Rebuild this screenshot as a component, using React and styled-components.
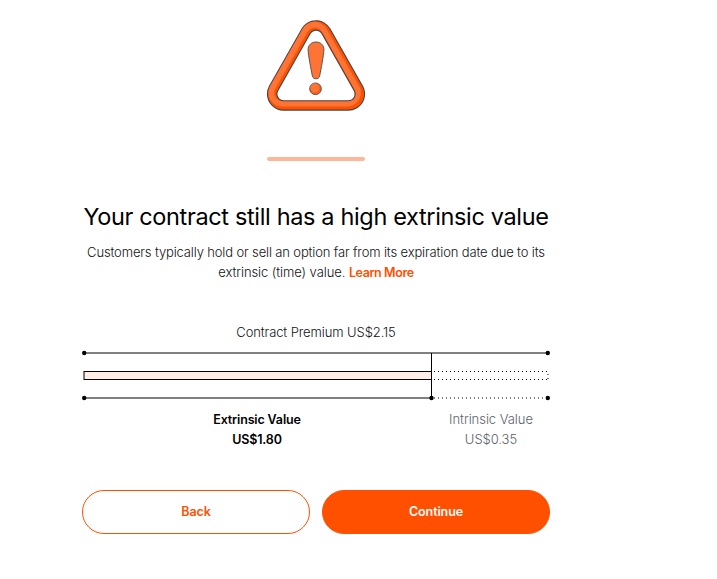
import React from 'react'
import styled, { createGlobalStyle, css } from 'styled-components'

const GlobalStyle = createGlobalStyle`
  * {
    box-sizing: border-box;
  }
  body {
    margin: 0;
    background: #fff;
    color: #000;
    font-family: Inter, 'Liberation Sans', sans-serif;
  }
`

// the three corner centres of the rounded sign
const TRIANGLE = 'M52 20.9 L84.4 78 H19.6 Z'
const MARK =
  'M52 26 C56.6 26 60.2 29.4 59.9 34 C59.6 40 57 53 55.6 60.2 C55 63.6 49 63.6 48.4 60.2 C47 53 44.4 40 44.1 34 C43.8 29.4 47.4 26 52 26 Z'

const WarningIcon = () => (
  <Sign viewBox="0 0 104 100" role="img" aria-label="Warning">
    <g strokeLinejoin="round">
      <path d={TRIANGLE} fill="#444" stroke="#444" strokeWidth="33.4" />
      <path d={TRIANGLE} fill="#ff5000" stroke="#ff5000" strokeWidth="31.2" />
      <path d={TRIANGLE} transform="translate(-1.4 -1.2)" fill="none" stroke="#ff7434" strokeWidth="27.6" />
      <path d={TRIANGLE} transform="translate(-1.2 -1)" fill="#ff5000" stroke="#ff5000" strokeWidth="16.6" />
      <path d={TRIANGLE} fill="#444" stroke="#444" strokeWidth="14.6" />
      <path d={TRIANGLE} fill="#fff" stroke="#fff" strokeWidth="12.4" />
    </g>
    <path d={MARK} fill="#ff7434" stroke="#555" strokeWidth="1" />
    <circle cx="51.5" cy="72.8" r="5.8" fill="#ff5c14" stroke="#555" strokeWidth="1" />
    <circle cx="50.8" cy="71.9" r="4.3" fill="#ff7434" />
  </Sign>
)

const ValueChart = () => (
  <Chart viewBox="0 0 468 52">
    <g stroke="#000" strokeWidth="1" fill="none">
      <path d="M2 4H466M2 49H349.5" />
      <rect x="2" y="22.5" width="347.5" height="8" fill="#ffede6" />
      <path d="M349.5 4V49" />
      <path d="M352 22.5H467M352 30.5H467M352 49H467" strokeDasharray="1 3" />
      <path d="M466 25V30" strokeDasharray="1 3" />
    </g>
    <circle cx="2.2" cy="4" r="2.2" />
    <circle cx="465.8" cy="4" r="2.2" />
    <circle cx="2.2" cy="49" r="2.2" />
    <circle cx="349.5" cy="49" r="2.2" />
    <circle cx="465.8" cy="49" r="2.2" />
  </Chart>
)

const App = () => {
  return (
    <Wrapper>
      <GlobalStyle />
      <WarningIcon />
      <Shadow />
      <Title>Your contract still has a high extrinsic value</Title>
      <Info>
        <Line $spacing="-0.14px">Customers typically hold or sell an option far from its expiration date due to its</Line>
        <Line $spacing="-0.08px">
          extrinsic (time) value. <LearnMore href="#">Learn More</LearnMore>
        </Line>
      </Info>
      <Premium>Contract Premium US$2.15</Premium>
      <ValueChart />
      <Legend>
        <Value $strong>
          <span>Extrinsic Value</span>
          <span>US$1.80</span>
        </Value>
        <Value>
          <span>Intrinsic Value</span>
          <span>US$0.35</span>
        </Value>
      </Legend>
      <Actions>
        <Button>Back</Button>
        <Button $primary>Continue</Button>
      </Actions>
    </Wrapper>
  )
}

const Wrapper = styled.main`
  width: 468px;
  margin-left: 82px;
  padding-top: 16px;
  display: flex;
  flex-direction: column;
  align-items: center;
`

const Sign = styled.svg`
  display: block;
  width: 104px;
  height: 100px;
`

const Shadow = styled.div`
  width: 98px;
  height: 4px;
  margin-top: 41px;
  border-radius: 2px;
  background: #ffb799;
`

const Title = styled.h1`
  margin: 40px 0 0;
  font-size: 23.5px;
  font-weight: 400;
  line-height: 32px;
  letter-spacing: -0.35px;
  white-space: nowrap;
`

const Info = styled.div`
  margin-top: 9px;
  display: flex;
  flex-direction: column;
  align-items: center;
`

const Line = styled.div`
  color: #121215;
  font-size: 13px;
  font-weight: 300;
  line-height: 20px;
  letter-spacing: ${({ $spacing }) => $spacing};
  white-space: nowrap;
`

const LearnMore = styled.a`
  color: #ff5000;
  font-size: 12.5px;
  font-weight: 600;
  line-height: 1;
  letter-spacing: -0.4px;
  text-decoration: none;
`

const Premium = styled.div`
  margin-top: 40px;
  color: #121215;
  font-size: 13px;
  font-weight: 300;
  line-height: 20px;
  letter-spacing: -0.1px;
`

const Chart = styled.svg`
  display: block;
  width: 468px;
  height: 52px;
  margin-top: 7px;
`

const Legend = styled.div`
  width: 100%;
  margin-top: 8px;
  display: grid;
  grid-template-columns: 350px 118px;
`

const Value = styled.div`
  height: 40px;
  padding-top: ${({ $strong }) => ($strong ? '1px' : '0')};
  display: flex;
  flex-direction: column;
  align-items: center;
  color: ${({ $strong }) => ($strong ? '#000' : '#5b636a')};
  font-size: ${({ $strong }) => ($strong ? '12.5px' : '13px')};
  font-weight: ${({ $strong }) => ($strong ? 600 : 300)};
  line-height: 20px;
  letter-spacing: ${({ $strong }) => ($strong ? '-0.15px' : '-0.05px')};
`

const Actions = styled.div`
  width: 100%;
  margin-top: 41px;
  display: grid;
  grid-template-columns: 1fr 1fr;
  gap: 12px;
`

const Button = styled.button`
  height: 44px;
  padding: 0 0 2px;
  border: 1px solid #ff5000;
  border-radius: 22px;
  background: #fff;
  color: #ff5000;
  font-family: inherit;
  font-size: 12.5px;
  font-weight: 600;
  letter-spacing: -0.1px;
  cursor: pointer;
  ${({ $primary }) =>
    $primary &&
    css`
      background: #ff5000;
      color: #fff;
    `}
`

export default App
